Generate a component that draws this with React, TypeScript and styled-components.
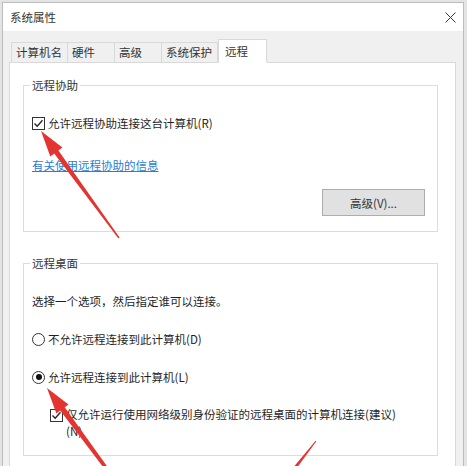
import React from "react";
import styled, { createGlobalStyle } from "styled-components";

const Global = createGlobalStyle`
  html, body {
    margin: 0;
    padding: 0;
    width: 467px;
    height: 466px;
    overflow: hidden;
    background: #e4e4e4;
  }
  * { box-sizing: border-box; }
`;

const FONT = `"Noto Sans CJK SC", "Noto Sans", sans-serif`;

const Stage = styled.div`
  position: relative;
  width: 467px;
  height: 466px;
  overflow: hidden;
  padding: 2px 0 0 2px;
  font-family: ${FONT};
  font-size: 11.5px;
  color: #1f1f1f;
`;

const Window = styled.div`
  width: 462px;
  height: 520px;
  border: 1px solid #bdbdbd;
  background: #f0f0f0;
  display: flex;
  flex-direction: column;
`;

const TitleBar = styled.div`
  height: 28px;
  background: #ffffff;
  display: flex;
  align-items: center;
  justify-content: space-between;
  padding-left: 7px;
`;

const Title = styled.span`
  font-size: 11.5px;
  color: #333;
`;

const CloseBox = styled.div`
  width: 26px;
  height: 28px;
  display: flex;
  align-items: center;
  justify-content: center;
`;

const Body = styled.div`
  flex: 1;
  padding: 9px 7px 0 6px;
  display: flex;
  flex-direction: column;
`;

const TabRow = styled.div`
  height: 23px;
  display: flex;
  align-items: flex-end;
  padding-left: 2px;
  position: relative;
  z-index: 1;
  margin-bottom: -1px;
`;

const Tab = styled.div<{ $w: number; $active?: boolean }>`
  width: ${(p) => p.$w}px;
  height: ${(p) => (p.$active ? 24 : 21)}px;
  border: 1px solid #d9d9d9;
  border-bottom: ${(p) => (p.$active ? "1px solid #ffffff" : "1px solid #d9d9d9")};
  border-left: ${(p) => (p.$active ? "1px solid #d9d9d9" : "none")};
  background: ${(p) => (p.$active ? "#ffffff" : "#f0f0f0")};
  padding-left: ${(p) => (p.$active ? 6 : 4)}px;
  padding-top: 1px;
  display: flex;
  align-items: center;
  line-height: 1;
  color: #333;
  &:first-child { border-left: 1px solid #d9d9d9; }
`;

const Panel = styled.div`
  flex: 1;
  background: #ffffff;
  border: 1px solid #d9d9d9;
  padding: 22px 17px 0 13px;
  display: flex;
  flex-direction: column;
`;

const Group = styled.div<{ $gap?: number }>`
  border: 1px solid #dcdcdc;
  padding: 0 0 15px 8px;
  margin-top: ${(p) => p.$gap ?? 8}px;
  display: flex;
  flex-direction: column;
`;

const Legend = styled.div`
  align-self: flex-start;
  margin: -9px 0 0 -2px;
  padding: 0 2px;
  background: #ffffff;
  line-height: 16px;
  color: #333;
`;

const Row = styled.div<{ $mt: number; $indent?: number }>`
  margin-top: ${(p) => p.$mt}px;
  margin-left: ${(p) => p.$indent ?? 0}px;
  display: flex;
  align-items: center;
  gap: 3px;
  line-height: 16px;
`;

const TopRow = styled(Row)`
  align-items: flex-start;
  line-height: 17px;
`;

const Text = styled.div<{ $mt: number }>`
  margin-top: ${(p) => p.$mt}px;
  line-height: 16px;
`;

const Box = styled.span`
  width: 13px;
  height: 13px;
  flex: none;
  border: 1px solid #333;
  background: #fff;
  display: inline-flex;
  align-items: center;
  justify-content: center;
`;

const SubBox = styled(Box)`
  margin-top: 3px;
`;

const Radio = styled.span<{ $on?: boolean }>`
  width: 13px;
  height: 13px;
  flex: none;
  border: 1px solid #333;
  border-radius: 50%;
  background: #fff;
  display: inline-flex;
  align-items: center;
  justify-content: center;
  &::after {
    content: "";
    width: 6px;
    height: 6px;
    border-radius: 50%;
    background: ${(p) => (p.$on ? "#111" : "transparent")};
  }
`;

const Link = styled.a<{ $mt: number }>`
  margin-top: ${(p) => p.$mt}px;
  align-self: flex-start;
  color: #2b7cd3;
  text-decoration: underline;
  line-height: 16px;
`;

const Button = styled.div`
  align-self: flex-end;
  margin: 16px 12px 0 0;
  width: 103px;
  height: 27px;
  background: #e1e1e1;
  border: 1px solid #adadad;
  display: flex;
  align-items: center;
  justify-content: center;
  color: #333;
`;

const Overlay = styled.svg`
  position: absolute;
  left: 0;
  top: 0;
  pointer-events: none;
`;

const Check = () => (
  <svg width="11" height="11" viewBox="0 0 11 11">
    <path d="M1.5 5.5 L4.2 8.3 L9.5 2.2" fill="none" stroke="#222" strokeWidth="1.3" />
  </svg>
);

function arrowPoints(
  tip: [number, number],
  tail: [number, number],
  headLen: number,
  headHalf: number,
  shaftHalf: number,
  tailHalf: number
): string {
  const dx = tip[0] - tail[0];
  const dy = tip[1] - tail[1];
  const len = Math.hypot(dx, dy);
  const ux = dx / len;
  const uy = dy / len;
  const nx = -uy;
  const ny = ux;
  const bx = tip[0] - ux * headLen;
  const by = tip[1] - uy * headLen;
  const pts: [number, number][] = [
    tip,
    [bx + nx * headHalf, by + ny * headHalf],
    [bx + nx * shaftHalf, by + ny * shaftHalf],
    [tail[0] + nx * tailHalf, tail[1] + ny * tailHalf],
    [tail[0] - nx * tailHalf, tail[1] - ny * tailHalf],
    [bx - nx * shaftHalf, by - ny * shaftHalf],
    [bx - nx * headHalf, by - ny * headHalf],
  ];
  return pts.map((p) => `${p[0].toFixed(1)},${p[1].toFixed(1)}`).join(" ");
}

const RED = "#e3342f";

export default function App() {
  return (
    <>
      <Global />
      <Stage>
        <Window>
          <TitleBar>
            <Title>系统属性</Title>
            <CloseBox>
              <svg width="11" height="11" viewBox="0 0 11 11">
                <path d="M0.5 0.5 L10.5 10.5 M10.5 0.5 L0.5 10.5" stroke="#333" strokeWidth="1" />
              </svg>
            </CloseBox>
          </TitleBar>
          <Body>
            <TabRow>
              <Tab $w={57}>计算机名</Tab>
              <Tab $w={47}>硬件</Tab>
              <Tab $w={47}>高级</Tab>
              <Tab $w={56}>系统保护</Tab>
              <Tab $w={49} $active>远程</Tab>
            </TabRow>
            <Panel>
              <Group $gap={0}>
                <Legend>远程协助</Legend>
                <Row $mt={22}>
                  <Box><Check /></Box>
                  <span>允许远程协助连接这台计算机(R)</span>
                </Row>
                <Link $mt={26}>有关使用远程协助的信息</Link>
                <Button>高级(V)...</Button>
              </Group>
              <Group $gap={31}>
                <Legend>远程桌面</Legend>
                <Text $mt={22}>选择一个选项，然后指定谁可以连接。</Text>
                <Row $mt={22}>
                  <Radio />
                  <span>不允许远程连接到此计算机(D)</span>
                </Row>
                <Row $mt={22}>
                  <Radio $on />
                  <span>允许远程连接到此计算机(L)</span>
                </Row>
                <TopRow $mt={21} $indent={18}>
                  <SubBox><Check /></SubBox>
                  <span>
                    仅允许运行使用网络级别身份验证的远程桌面的计算机连接(建议)
                    <br />
                    (N)
                  </span>
                </TopRow>
              </Group>
            </Panel>
          </Body>
        </Window>
        <Overlay width="467" height="466" viewBox="0 0 467 466">
          <polygon fill={RED} points={arrowPoints([41, 131], [119, 238], 26, 7.5, 2.6, 0.8)} />
          <polygon fill={RED} points={arrowPoints([47, 388], [112, 476], 26, 7.5, 2.8, 1.6)} />
          <polygon fill={RED} points={arrowPoints([262, 510], [316, 441], 26, 7.5, 2.4, 0.5)} />
        </Overlay>
      </Stage>
    </>
  );
}
